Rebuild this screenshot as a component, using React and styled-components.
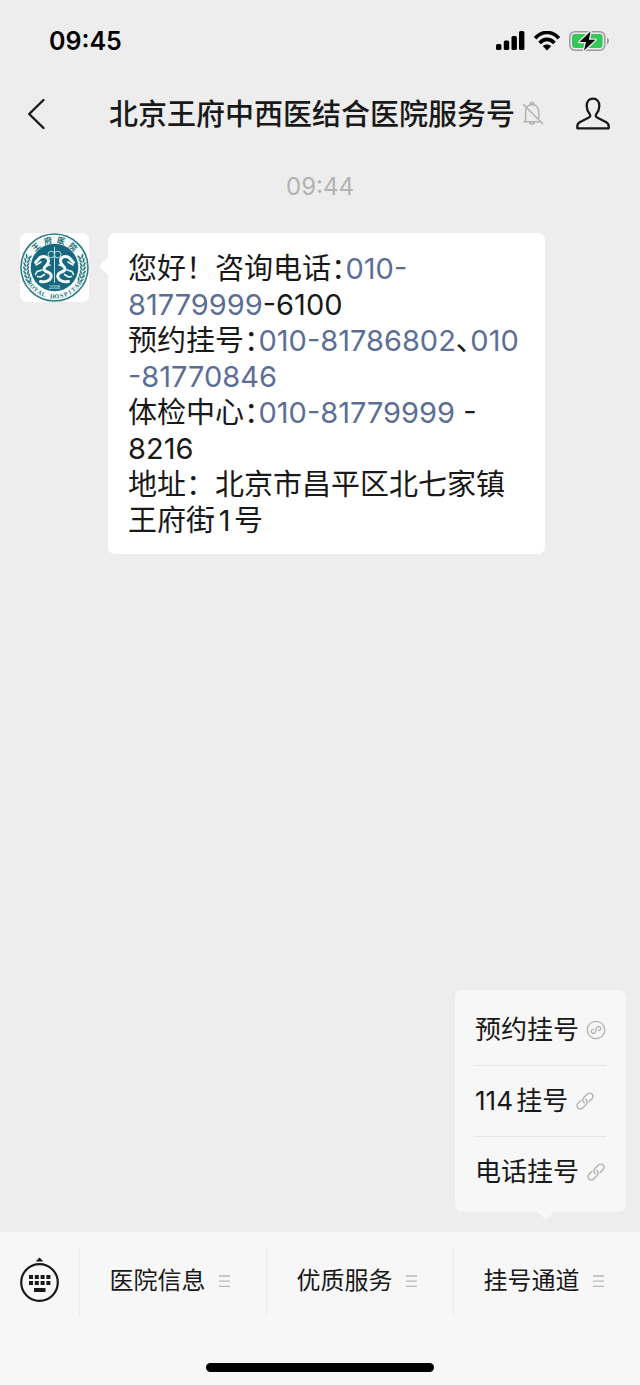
import React, { useState } from 'react';
import styled, { createGlobalStyle } from 'styled-components';

const GlobalStyle = createGlobalStyle`
  * {
    box-sizing: border-box;
  }
  body {
    margin: 0;
    background: #ededed;
    color: #191919;
    font-family: Inter, 'Noto Sans CJK SC', sans-serif;
    text-autospace: normal;
  }
  button {
    padding: 0;
    border: none;
    background: none;
    color: inherit;
    font: inherit;
    cursor: pointer;
  }
  a {
    color: inherit;
    text-decoration: none;
  }
  svg {
    display: block;
    flex: none;
  }
`;

const Page = styled.div`
  display: flex;
  flex-direction: column;
  min-height: 100vh;
`;

const StatusBar = styled.div`
  display: flex;
  align-items: center;
  justify-content: space-between;
  height: 82px;
  padding: 0 30px 0 49px;
`;

const Clock = styled.time`
  font-size: 25px;
  font-weight: 600;
  color: #000;
`;

const StatusIcons = styled.div`
  display: flex;
  align-items: center;
  gap: 9px;
`;

const Header = styled.header`
  display: flex;
  align-items: center;
  height: 64px;
  padding: 0 29px 0 26px;
`;

const IconButton = styled.button`
  display: flex;
`;

const TitleGroup = styled.div`
  flex: 1;
  display: flex;
  align-items: center;
  justify-content: flex-end;
  gap: 7px;
  padding-right: 31px;
`;

const Title = styled.h1`
  margin: 0;
  padding-top: 2px;
  font-size: 29px;
  font-weight: 500;
  line-height: 40px;
  white-space: nowrap;
`;

const Chat = styled.main`
  flex: 1;
  padding: 24px 20px;
`;

const Timestamp = styled.time`
  display: block;
  margin-bottom: 30px;
  font-size: 24px;
  line-height: 33px;
  text-align: center;
  color: #b2b2b2;
`;

const Message = styled.article`
  display: flex;
  align-items: flex-start;
  gap: 19px;
  padding-right: 75px;
`;

const Avatar = styled.div`
  flex: none;
  overflow: hidden;
  border-radius: 7px;
  background: #fff;
`;

const Bubble = styled.div`
  position: relative;
  flex: 1;
  padding: 18px 18px 15px 20px;
  border-radius: 7px;
  background: #fff;
  font-size: 29px;
  line-height: 36px;

  &::before {
    content: '';
    position: absolute;
    top: 26px;
    left: -6px;
    width: 14px;
    height: 14px;
    border-radius: 2px;
    background: #fff;
    transform: rotate(45deg);
  }

  p {
    margin: 0;
  }
`;

const Phone = styled.a`
  color: #5d6e95;
`;

/* half-width form of the full-width mark */
const Mark = styled.span`
  font-feature-settings: 'halt';
`;

const BottomBar = styled.footer`
  position: relative;
  padding-top: 15px;
  background: #f7f7f7;
`;

const Menu = styled.nav`
  display: flex;
  height: 69px;
`;

const KeyboardButton = styled.button`
  display: flex;
  align-items: center;
  width: 79px;
  padding: 0 0 4px 19px;
`;

const MenuButton = styled.button`
  flex: 1;
  display: flex;
  align-items: center;
  justify-content: center;
  gap: 12px;
  padding: 0 6px 2px 0;
  border-left: 1px solid #ebebeb;
  font-size: 24px;
  line-height: 34px;
  white-space: nowrap;
`;

const HomeIndicator = styled.div`
  width: 228px;
  height: 9px;
  margin: 47px auto 13px;
  border-radius: 5px;
  background: #000;
`;

const Popup = styled.ul`
  position: absolute;
  right: 14px;
  bottom: calc(100% + 20px);
  margin: 0;
  padding: 5px 20px;
  border-radius: 8px;
  background: #f7f7f7;
  list-style: none;

  &::after {
    content: '';
    position: absolute;
    right: 72px;
    bottom: -8px;
    border: 8px solid transparent;
    border-top-color: #f7f7f7;
    border-bottom: none;
  }
`;

const PopupItem = styled.li`
  & + & {
    border-top: 1px solid #e6e6e6;
  }
`;

const PopupLink = styled.a`
  display: flex;
  align-items: center;
  gap: 7px;
  height: 70px;
  font-size: 26px;
  line-height: 36px;
`;

const SignalIcon = () => (
  <svg width="29" height="20" viewBox="0 0 29 20">
    <rect x="0" y="13" width="5.4" height="6" rx="1.5" />
    <rect x="7.8" y="9.5" width="5.4" height="9.5" rx="1.5" />
    <rect x="15.5" y="5" width="5.4" height="14" rx="1.5" />
    <rect x="23" y="0" width="5.4" height="19" rx="1.5" />
  </svg>
);

const WifiIcon = () => (
  <svg width="26" height="20" viewBox="0 0 26 20" fill="none" stroke="#000" strokeWidth="3.6">
    <path d="M1.2 7.2C8-.4 18-.4 24.8 7.2" />
    <path d="M5.6 12c4.5-4.8 10.3-4.8 14.8 0" />
    <path d="M13 19.5l-4.3-4.4c2.4-2.2 6.2-2.2 8.6 0z" fill="#000" stroke="none" />
  </svg>
);

const BatteryIcon = () => (
  <svg width="41" height="22" viewBox="0 0 41 22">
    <rect x="0.8" y="1.8" width="35" height="18.4" rx="5" fill="none" stroke="#9b9b9b" strokeWidth="1.5" />
    <rect x="3" y="4" width="30.6" height="14" rx="3" fill="#35c759" />
    <path d="M38 7.700c2.600 1 2.600 5.600 0 6.600z" fill="#9b9b9b" />
    <path
      d="M21.500 1.500L10.500 12h6.500l-2 8.500L26.500 9.800h-6.700z"
      stroke="#ededed"
      strokeWidth="2.6"
      paintOrder="stroke"
      strokeLinejoin="round"
    />
  </svg>
);

const BackIcon = () => (
  <svg width="20" height="32" viewBox="0 0 20 32" fill="none" stroke="#191919" strokeWidth="2.4">
    <path d="M17.500 2L3.200 16l14.300 14" strokeLinejoin="round" strokeLinecap="round" />
  </svg>
);

const MutedIcon = () => (
  <svg width="23" height="26" viewBox="0 0 23 26" fill="none" stroke="#b2b2b2" strokeWidth="1.5">
    <path d="M1.200 20.800h17.500M3.600 20.800V11c0-4.600 2.800-7.400 6.400-7.400s6.800 2.800 6.800 7.400v6.500" />
    <path d="M8.200 3.800c0-3 3.800-3 3.800 0M7.700 21.200c.4 2.600 4.400 2.600 4.800 0" />
    <path d="M1.200 3.200l20 20" />
  </svg>
);

const PersonIcon = () => (
  <svg width="35" height="34" viewBox="0 0 35 34" fill="none" stroke="#191919" strokeWidth="2.3">
    <path
      d="M17 1.700c-4 0-6.300 3-6.300 7.200 0 3.400 1.200 5.800 3 8.200.9 1.300.6 2.700-.8 3.400L3.700 25.300c-1.800 1-2.400 2.200-2.400 4.200v1.800h31.400v-1.800c0-2-.6-3.200-2.400-4.200l-9.200-4.800c-1.400-.7-1.700-2.100-.8-3.400 1.800-2.400 3-4.800 3-8.200 0-4.200-2.300-7.200-6.300-7.200z"
      strokeLinejoin="round"
    />
  </svg>
);

const KeyboardIcon = () => (
  <svg width="41" height="46" viewBox="0 0 41 46" fill="#191919">
    <path d="M20.500 0.500l3.800 4h-7.600z" />
    <circle cx="20.500" cy="25.500" r="18.300" fill="none" stroke="#191919" strokeWidth="2.200" />
    {[10, 15.8, 21.6, 27.4].map((x) => (
      <React.Fragment key={x}>
        <rect x={x} y="18" width="4" height="4" />
        <rect x={x} y="24" width="4" height="4" />
      </React.Fragment>
    ))}
    <rect x="15" y="31" width="11.500" height="4" />
  </svg>
);

const LinesIcon = () => (
  <svg width="13" height="14" viewBox="0 0 13 14" stroke="#b8b8b8" strokeWidth="1.3">
    <path d="M1 2h11M1 7.200h11M1 12.300h11" />
  </svg>
);

const LinkIcon = () => (
  <svg width="20" height="20" viewBox="0 0 20 20" fill="none" stroke="#b2b2b2" strokeWidth="1.4" strokeLinecap="round">
    <path d="M9.300 11.800c-2-1.600-2-3.700-.4-5.300l3.200-3.200c1.500-1.500 3.600-1.500 4.900-.2s1.300 3.300-.2 4.800l-2.600 2.600" />
    <path d="M10.700 8.200c2 1.600 2 3.700.4 5.300l-3.200 3.200c-1.500 1.500-3.600 1.500-4.900.2s-1.300-3.300.2-4.800l2.600-2.600" />
  </svg>
);

const MiniProgramIcon = () => (
  <svg width="20" height="20" viewBox="0 0 20 20" fill="none" stroke="#b2b2b2" strokeWidth="1.3" strokeLinecap="round">
    <circle cx="10" cy="10" r="8.700" />
    <path
      d="M12.400 10.200c1.300-.3 2-1.100 2-2.100 0-1.200-1-2-2.200-2S10 6.900 10 8.100v3.800c0 1.200-1 2-2.200 2s-2.200-.8-2.200-2c0-1 .7-1.800 2-2.100"
      transform="rotate(12 10 10)"
    />
  </svg>
);

const Laurel = () => (
  <g fill="#2f7d83">
    {[202, 194, 186, 178, 170, 162, 154].map((deg) => (
      <g key={deg} transform={`rotate(${deg} 34.500 34.500)`}>
        <ellipse cx="61.300" cy="34.500" rx="0.900" ry="2.600" transform="rotate(28 61.300 34.500)" />
        <ellipse cx="64.500" cy="34.500" rx="0.900" ry="2.600" transform="rotate(-28 64.500 34.500)" />
      </g>
    ))}
  </g>
);

const Dragon = () => (
  <g fill="none" stroke="#f2fafa" strokeLinecap="round" strokeLinejoin="round">
    <path
      d="M15.500 29.500l4.500-5c4-2.400 8.500-.4 8.500 3.600 0 3-2.500 4.300-4 6.400-1.300 2 0 3.600 2.400 4.300 3.600 1 5 3.300 4 6-1.200 3.200-6 4.600-10.400 3.700"
      strokeWidth="3"
    />
    <path d="M16 32l5-3M22 37l-5 1.500-1.500 3M24.500 41.500l-4 2.500-3-.5M26 33l4-1" strokeWidth="1.600" />
  </g>
);

const ringLetters = [...'ROYAL HOSPITAL'];

const HospitalLogo = () => (
  <svg width="69" height="69" viewBox="0 0 69 69" role="img" aria-label="王府医院">
    <rect width="69" height="69" fill="#fff" />
    <circle cx="34.500" cy="34.500" r="33.500" fill="#f4fafa" stroke="#2f7d83" strokeWidth="1.600" />
    <circle cx="34.500" cy="34.500" r="23.800" fill="#17687f" />
    <Laurel />
    <g transform="translate(69 0) scale(-1 1)">
      <Laurel />
    </g>
    <Dragon />
    <g transform="translate(69 0) scale(-1 1)">
      <Dragon />
    </g>
    <g fill="none" stroke="#b9dde2" strokeWidth="1">
      <path d="M34.500 14v36" />
      <circle cx="31.300" cy="21.500" r="3.300" />
      <circle cx="37.700" cy="21.500" r="3.300" />
    </g>
    <g fontFamily="'Noto Sans CJK SC', sans-serif" fontSize="8" fontWeight="700" fill="#1f6f75" textAnchor="middle">
      {['王', '府', '医', '院'].map((char, i) => (
        <text key={char} x="34.500" y="9.800" transform={`rotate(${-42 + i * 28} 34.500 34.500)`}>
          {char}
        </text>
      ))}
    </g>
    <g fontFamily="'Liberation Serif', serif" fontSize="6" fontWeight="700" fill="#1f6f75" textAnchor="middle">
      {ringLetters.map((char, i) =>
        char === ' ' ? null : (
          <text key={i} x="34.500" y="65.500" transform={`rotate(${58 - i * 9} 34.500 34.500)`}>
            {char}
          </text>
        )
      )}
    </g>
    <text x="34.500" y="55.500" fontFamily="'Liberation Sans', sans-serif" fontSize="5" fill="#d5ecef" textAnchor="middle">
      2008
    </text>
  </svg>
);

const menus = ['医院信息', '优质服务', '挂号通道'];

const popupItems = [
  { label: '预约挂号', icon: <MiniProgramIcon /> },
  { label: '114挂号', icon: <LinkIcon /> },
  { label: '电话挂号', icon: <LinkIcon /> },
];

const App = () => {
  const [openMenu, setOpenMenu] = useState('挂号通道');

  return (
    <Page lang="zh-CN">
      <GlobalStyle />
      <StatusBar>
        <Clock>09:45</Clock>
        <StatusIcons>
          <SignalIcon />
          <WifiIcon />
          <BatteryIcon />
        </StatusIcons>
      </StatusBar>

      <Header>
        <IconButton aria-label="返回">
          <BackIcon />
        </IconButton>
        <TitleGroup>
          <Title>北京王府中西医结合医院服务号</Title>
          <MutedIcon />
        </TitleGroup>
        <IconButton aria-label="资料">
          <PersonIcon />
        </IconButton>
      </Header>

      <Chat>
        <Timestamp>09:44</Timestamp>
        <Message>
          <Avatar>
            <HospitalLogo />
          </Avatar>
          <Bubble>
            <p>
              您好！咨询电话<Mark>：</Mark>
              <Phone href="tel:010-81779999">
                010-
                <br />
                81779999
              </Phone>
              -6100
            </p>
            <p>
              预约挂号<Mark>：</Mark>
              <Phone href="tel:010-81786802">010-81786802</Phone>
              <Mark>、</Mark>
              <Phone href="tel:010-81770846">
                010
                <br />
                -81770846
              </Phone>
            </p>
            <p>
              体检中心<Mark>：</Mark>
              <Phone href="tel:010-81779999">010-81779999</Phone>
              {' -'}
              <br />
              8216
            </p>
            <p>地址：北京市昌平区北七家镇王府街1号</p>
          </Bubble>
        </Message>
      </Chat>

      <BottomBar>
        {openMenu === '挂号通道' && (
          <Popup>
            {popupItems.map((item) => (
              <PopupItem key={item.label}>
                <PopupLink href="#">
                  {item.label}
                  {item.icon}
                </PopupLink>
              </PopupItem>
            ))}
          </Popup>
        )}
        <Menu>
          <KeyboardButton aria-label="键盘">
            <KeyboardIcon />
          </KeyboardButton>
          {menus.map((label) => (
            <MenuButton key={label} onClick={() => setOpenMenu(openMenu === label ? null : label)}>
              {label}
              <LinesIcon />
            </MenuButton>
          ))}
        </Menu>
        <HomeIndicator />
      </BottomBar>
    </Page>
  );
};

export default App;
